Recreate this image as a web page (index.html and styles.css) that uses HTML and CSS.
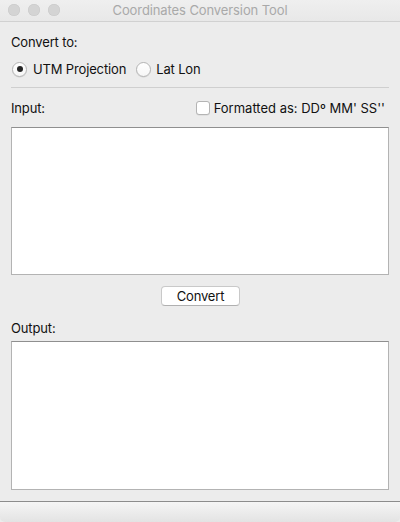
FILE: index.html
```html
<!DOCTYPE html>
<html>
<head>
<meta charset="utf-8">
<link rel="stylesheet" href="styles.css">
</head>
<body>
<div class="window">
  <div class="titlebar">
    <div class="lights">
      <span class="light"></span><span class="light"></span><span class="light"></span>
    </div>
    <div class="title">Coordinates Conversion Tool</div>
  </div>
  <div class="content">
    <div class="label first">Convert to:</div>
    <div class="radios">
      <label class="radio"><span class="circle checked"></span><span>UTM Projection</span></label>
      <label class="radio"><span class="circle"></span><span>Lat Lon</span></label>
    </div>
    <div class="sep"></div>
    <div class="input-row">
      <span class="label">Input:</span>
      <label class="check"><span class="box"></span><span class="check-text">Formatted as: DDº MM' SS''</span></label>
    </div>
    <div class="area input-area"></div>
    <div class="btn-row"><button class="btn">Convert</button></div>
    <div class="label out-label">Output:</div>
    <div class="area output-area"></div>
  </div>
  <div class="bottombar"></div>
</div>
</body>
</html>
```
FILE: styles.css
```css
html, body {
  margin: 0;
  padding: 0;
  background: #ececec;
}
body {
  font-family: Inter, "Noto Sans", sans-serif;
  font-size: 13px;
  color: #111;
  letter-spacing: -0.15px;
}
.window {
  width: 400px;
  height: 522px;
  display: flex;
  flex-direction: column;
  background: #ececec;
}
.titlebar {
  height: 21px;
  border-bottom: 1px solid #d1d1d1;
  background: linear-gradient(#efefef, #e8e8e8);
  position: relative;
  display: flex;
  align-items: center;
  justify-content: center;
}
.lights {
  position: absolute;
  left: 8px;
  top: 4px;
  display: flex;
  gap: 8px;
}
.light {
  width: 12px;
  height: 12px;
  border-radius: 50%;
  background: #d4d4d4;
  box-shadow: inset 0 0 0 0.5px #c8c8c8;
}
.title {
  color: #a9a9a9;
  font-size: 13px;
  line-height: 21px;
  letter-spacing: -0.1px;
}
.content {
  padding: 0 11px;
  display: flex;
  flex-direction: column;
}
.label {
  line-height: 16px;
}
.first {
  margin-top: 12px;
}
.radios {
  margin-top: 11px;
  display: flex;
  align-items: center;
  height: 16px;
  gap: 10px;
}
.radio {
  display: flex;
  align-items: center;
  gap: 6px;
}
.radio:first-child {
  margin-left: 1px;
}
.radio + .radio {
  gap: 5px;
}
.circle {
  width: 13px;
  height: 13px;
  border-radius: 50%;
  border: 1px solid #b4b4b4;
  background: linear-gradient(#ffffff, #f6f6f6);
  box-shadow: 0 0.5px 0.5px rgba(0,0,0,0.12);
  display: flex;
  align-items: center;
  justify-content: center;
}
.circle.checked::after {
  content: "";
  width: 6px;
  height: 6px;
  border-radius: 50%;
  background: #262626;
}
.sep {
  margin-top: 10px;
  height: 1px;
  background: #cfcfcf;
}
.input-row {
  margin-top: 12px;
  height: 16px;
  display: flex;
  align-items: center;
  justify-content: space-between;
}
.check {
  display: flex;
  align-items: center;
  gap: 4px;
  margin-right: 4px;
}
.check-text {
  letter-spacing: 0;
}
.box {
  width: 12px;
  height: 12px;
  border: 1px solid #b4b4b4;
  border-radius: 3px;
  background: #fff;
  box-shadow: 0 0.5px 0.5px rgba(0,0,0,0.1);
}
.area {
  background: #fff;
  border: 1px solid #b3b3b3;
  border-top-color: #8f8f8f;
}
.input-area {
  margin-top: 11px;
  height: 146px;
}
.btn-row {
  margin-top: 11px;
  display: flex;
  justify-content: center;
}
.btn {
  width: 79px;
  height: 20px;
  padding: 0;
  margin-left: 1px;
  font-family: inherit;
  font-size: 13px;
  letter-spacing: -0.15px;
  color: #111;
  background: #fff;
  border: 1px solid #c9c9c9;
  border-bottom-color: #b0b0b0;
  border-radius: 4px;
  line-height: 18px;
}
.out-label {
  margin-top: 14px;
}
.output-area {
  margin-top: 5px;
  height: 147px;
}
.bottombar {
  margin-top: auto;
  height: 20px;
  border-top: 1px solid #8c8c8c;
  background: linear-gradient(#f5f5f5, #e3e3e3);
  border-radius: 0 0 5px 5px;
}
```
